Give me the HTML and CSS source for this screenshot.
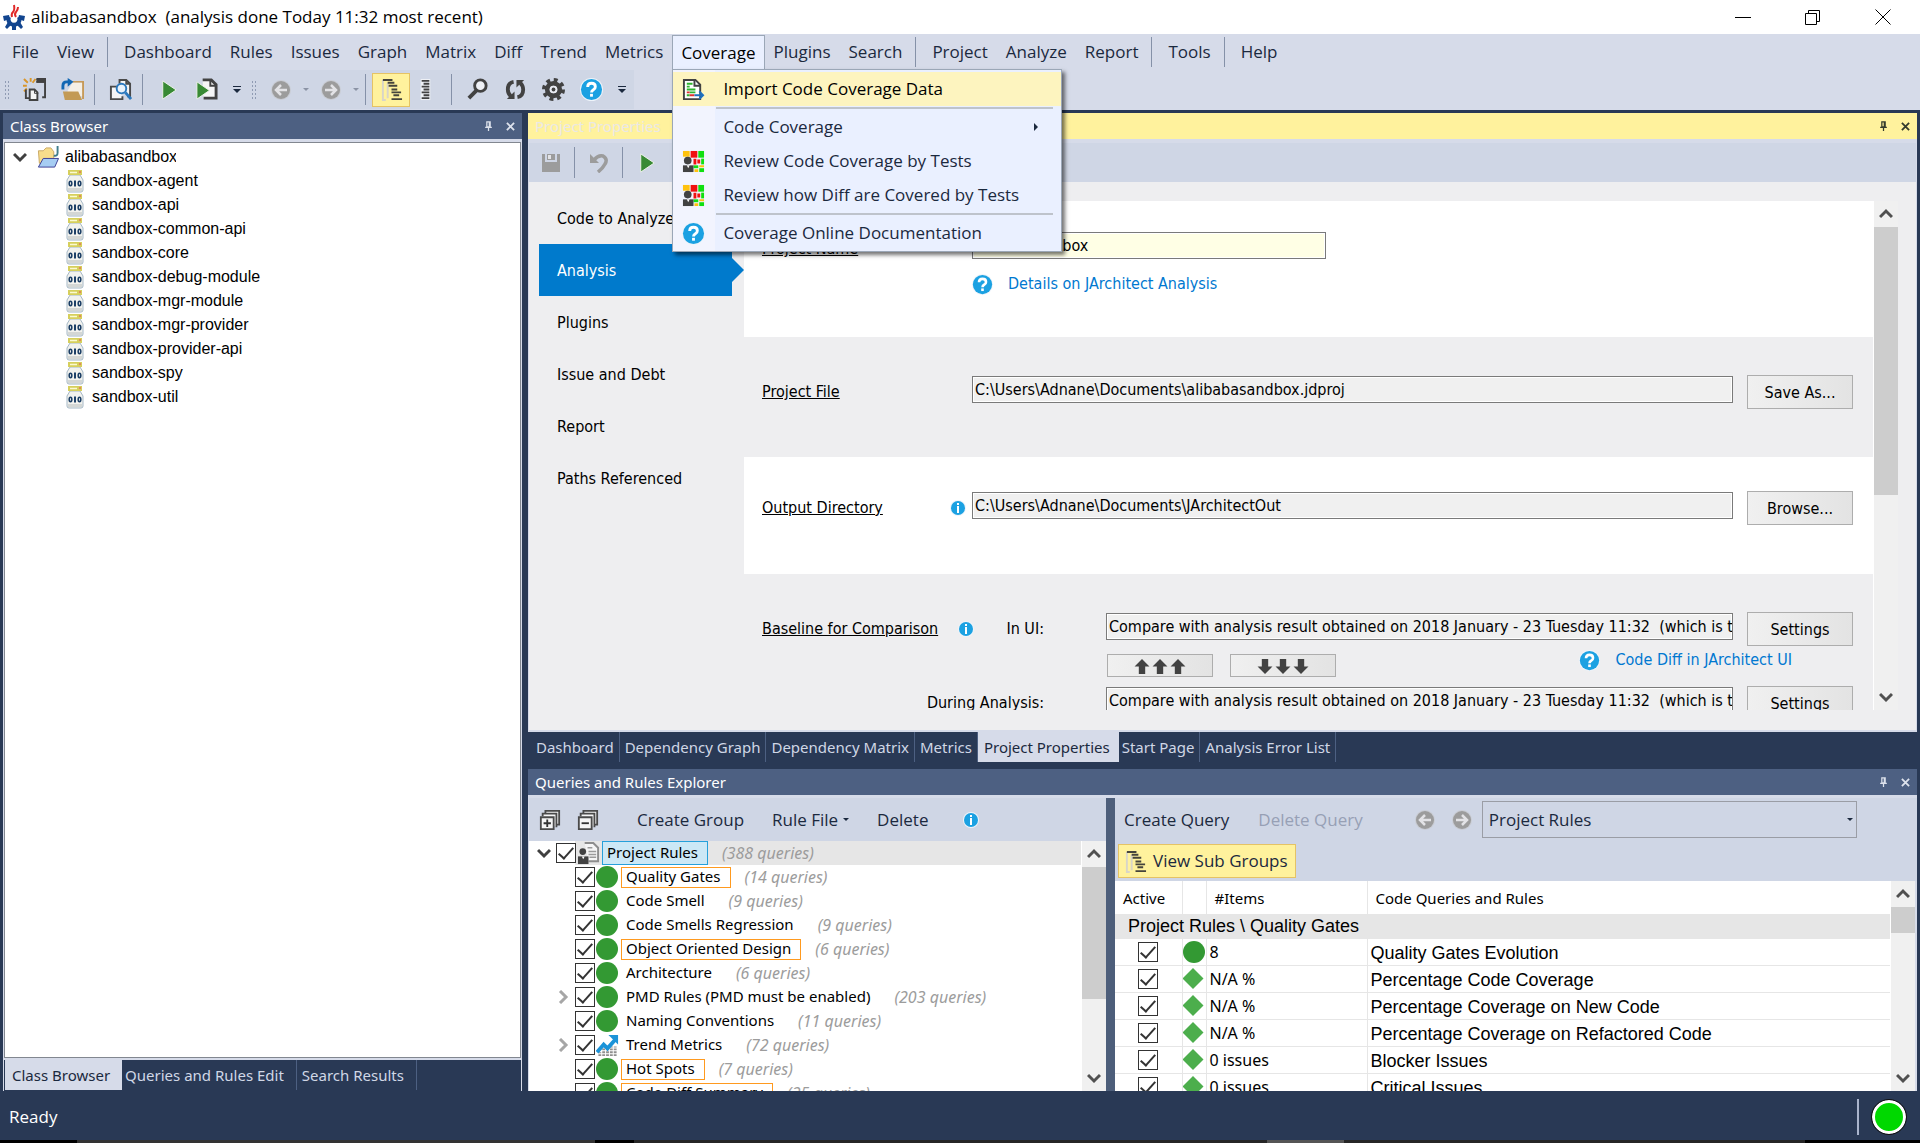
FILE: index.html
```html
<!DOCTYPE html>
<html lang="en">
<head>
<meta charset="utf-8">
<meta name="viewport" content="width=device-width, initial-scale=1">
<title>alibabasandbox - JArchitect</title>
<link rel="stylesheet" href="styles.css">
</head>
<body>
<svg class="sprite" aria-hidden="true">
  <symbol id="i-new" viewBox="0 0 24 24"><path d="M1 1l4 4M8 0v4M0 8h4M13 1l-3 4M1 14l3-3" stroke="#d9962b" stroke-width="2" fill="none"/><path d="M14 1h9v19h-3M14 4h9M3 12v9h4" stroke="#424242" stroke-width="2" fill="none"/><path d="M14 1h9v4h-9z" fill="#424242"/><path d="M7 12h5l3 3v8H7z" fill="#f5f5f5" stroke="#424242" stroke-width="2"/><path d="M12 12v4h4" stroke="#424242" fill="none"/></symbol>
  <symbol id="i-open" viewBox="0 0 24 24"><path d="M12 4h11v18" stroke="#c79a58" stroke-width="2" fill="none"/><path d="M12 5h10v14H7v-6z" fill="#f4efe6"/><path d="M2 14h16l4 9H4z" fill="#c39a55"/><path d="M2 12V8q0-4 4-4h3" stroke="#1267b3" stroke-width="3" fill="none"/><path d="M7 0l6 4-6 5z" fill="#1267b3"/></symbol>
  <symbol id="i-find" viewBox="0 0 24 24"><path d="M11 6V2h7l4 4v13h-3M18 2v4h4" stroke="#4a4a4a" stroke-width="2" fill="#f5f5f5"/><path d="M9 9H2v13h12v-3" stroke="#4a4a4a" stroke-width="2" fill="#f5f5f5"/><circle cx="13" cy="11" r="5" fill="#eaf3fb" stroke="#2b78bd" stroke-width="2"/><path d="M17 15l6 7" stroke="#2b78bd" stroke-width="3"/></symbol>
  <symbol id="i-play" viewBox="0 0 24 24"><path d="M6 3v19l14-9.500z" fill="#388a34" stroke="#edf2ea"/></symbol>
  <symbol id="i-playdoc" viewBox="0 0 24 24"><path d="M8 2h9l5 5v14H9" fill="#f5f5f5" stroke="#424242" stroke-width="3"/><path d="M16 2v6h6" stroke="#424242" stroke-width="2" fill="none"/><path d="M2 4v18l13-9z" fill="#388a34" stroke="#edf2ea"/></symbol>
  <symbol id="i-back" viewBox="0 0 20 20"><circle cx="10" cy="10" r="10" fill="#c9ccd3"/><circle cx="10" cy="10" r="9" fill="#9c9c9c"/><path d="M16 10H5M10 5l-5 5 5 5" stroke="#e3e3e6" stroke-width="2.500" fill="none"/></symbol>
  <symbol id="i-fwd" viewBox="0 0 20 20"><circle cx="10" cy="10" r="10" fill="#c9ccd3"/><circle cx="10" cy="10" r="9" fill="#9c9c9c"/><path d="M4 10h11M10 5l5 5-5 5" stroke="#e3e3e6" stroke-width="2.500" fill="none"/></symbol>
  <symbol id="i-tree" viewBox="0 0 24 24"><path d="M3 2v21h3M8 5v16" stroke="#d8d5c8" stroke-width="2" fill="none"/><path d="M3 2h10M8 5h7M9 8h9M12 12h6M12 15h10M14 18h6M12 22h11" stroke="#45443c" stroke-width="2"/></symbol>
  <symbol id="i-list" viewBox="0 0 24 24"><path d="M7 1h10v22H7z" fill="#eef0f5"/><path d="M8 3h8M10 6h6M8 9h8M10 12h6M8 15h8M10 18h6M8 21h8" stroke="#424242" stroke-width="2"/></symbol>
  <symbol id="i-search" viewBox="0 0 24 24"><circle cx="15" cy="8" r="6" fill="#eef0f5" stroke="#424242" stroke-width="3"/><path d="M11 13l-8 8" stroke="#424242" stroke-width="4"/></symbol>
  <symbol id="i-refresh" viewBox="0 0 24 24"><path d="M10 4q-6 1-6 8 0 4 3 7M14 20q6-1 6-8 0-4-3-7" stroke="#424242" stroke-width="4" fill="none"/><path d="M3 22h8v-8zM21 2h-8v8z" fill="#424242"/></symbol>
  <symbol id="i-gear" viewBox="0 0 24 24"><circle cx="12" cy="12" r="10" fill="none" stroke="#424242" stroke-width="4" stroke-dasharray="4 3.850"/><circle cx="12" cy="12" r="6.500" fill="none" stroke="#424242" stroke-width="5"/><circle cx="12" cy="12" r="4" fill="#e9ebf2"/><circle cx="12" cy="12" r="2" fill="#424242"/></symbol>
  <symbol id="i-help" viewBox="0 0 24 24"><circle cx="12" cy="12" r="12" fill="#eef4fa"/><circle cx="12" cy="12" r="11" fill="#1ba1e2"/><path d="M8 9.500q0-4 4-4t4 3.500q0 2-2 3.200t-2 2.800" stroke="#fff" stroke-width="3" fill="none"/><path d="M10.500 16.500h3v3h-3z" fill="#fff"/></symbol>
  <symbol id="i-info" viewBox="0 0 16 16"><circle cx="8" cy="8" r="8" fill="#eef4fa"/><circle cx="8" cy="8" r="7" fill="#1ba1e2"/><path d="M7 3h2v2H7zM7 6h2v7H7z" fill="#fff"/></symbol>
  <symbol id="i-pin" viewBox="0 0 10 12"><path d="M3 1h4v6H3zM1 7.500h8M5 8v4M6 1v6" stroke="currentColor" stroke-width="1.500" fill="none"/></symbol>
  <symbol id="i-x" viewBox="0 0 10 10"><path d="M1 1l8 8M9 1L1 9" stroke="currentColor" stroke-width="2" fill="none"/></symbol>
  <symbol id="i-chev" viewBox="0 0 14 14"><path d="M1 4l6 6 6-6" stroke="currentColor" stroke-width="3" fill="none"/></symbol>
  <symbol id="i-folder" viewBox="0 0 24 24"><path d="M2 5h5l3-3h5l3 4v12H3z" fill="#f7dd8c" stroke="#c9a763"/><path d="M22 0v7q0 4-4 3" stroke="#3f7d8c" stroke-width="2" fill="none"/><path d="M2 22l5-9h16l-4 9z" fill="#a6cdf3" stroke="#3a3d94"/></symbol>
  <symbol id="i-jar" viewBox="0 0 18 23"><path d="M4 5h10l3 5v10q0 2-2 2H3q-2 0-2-2V10z" fill="#f2f2ee" stroke="#a5b8c6"/><path d="M2 18h14v3H2z" fill="#d4d7d5"/><path d="M2 0h14v5H2z" fill="#d6cf5c"/><path d="M4 2.500h7" stroke="#fbf9d0" stroke-width="1.500"/><path d="M13 1h2v2h-2z" fill="#e08a5a"/><ellipse cx="4.500" cy="13.500" rx="1.300" ry="2.200" fill="none" stroke="#1c3f66" stroke-width="1.600"/><path d="M9 10.500v6" stroke="#1c3f66" stroke-width="2"/><ellipse cx="13.500" cy="13.500" rx="1.300" ry="2.200" fill="none" stroke="#1c3f66" stroke-width="1.600"/></symbol>
  <symbol id="i-import" viewBox="0 0 24 24"><path d="M2 2h12l5 5v15H2z" fill="#fff" stroke="#424242" stroke-width="2"/><path d="M13 2v6h6" fill="none" stroke="#424242" stroke-width="2"/><path d="M5 6h6M5 9h3M5 12h9" stroke="#2fb52f" stroke-width="2"/><path d="M8 15h6M5 18h3" stroke="#2fb52f" stroke-width="2"/><path d="M5 15h3M8 18h5" stroke="#e03030" stroke-width="2"/><path d="M13 18h9M18 14l4 4-4 4" stroke="#1d6fbf" stroke-width="2" fill="none"/></symbol>
  <symbol id="i-tests" viewBox="0 0 24 24"><path d="M1 1h7v6H1z" fill="#ffc20e"/><path d="M9 1h7v7H9z" fill="#f01010"/><path d="M17 1h6v7h-6z" fill="#10e010"/><path d="M12 9h3v6h-3zM16 10h3v4h-3z" fill="#f01010"/><path d="M20 9h3v6h-3z" fill="#10e010"/><path d="M12 16h5v3h-5z" fill="#10e010"/><path d="M18 16h5v2h-5zM13 20h4v3h-4z" fill="#ffc20e"/><path d="M18 19h5v4h-5z" fill="#10e010"/><circle cx="6" cy="11" r="4" fill="#424242"/><path d="M1 16h11v7H1z" fill="#424242"/><path d="M5 16h3l-1.500 3z" fill="#fff"/></symbol>
  <symbol id="i-save" viewBox="0 0 20 20"><path d="M1 1h3v8h12V1h3v18H1z" fill="#9c9c9c"/><path d="M6 1h8v6H6z" fill="#9c9c9c"/><path d="M7 2h3v4H7z" fill="#e3e3e6"/></symbol>
  <symbol id="i-undo" viewBox="0 0 20 20"><path d="M5 7q4-5 9-4 5 3 2 8-2 4-7 8" stroke="#9c9c9c" stroke-width="3.500" fill="none"/><path d="M1 1v9h9z" fill="#9c9c9c"/></symbol>
  <symbol id="i-up" viewBox="0 0 16 16"><path d="M8 1l7 7h-4v7H5V8H1z" fill="#424242"/></symbol>
  <symbol id="i-plus" viewBox="0 0 24 24"><path d="M7 6V2h15v15h-3M4 8V5h15v15" fill="#f5f5f5" stroke="#4a4a4a" stroke-width="2"/><path d="M2 9h14v13H2z" fill="#f5f5f5" stroke="#4a4a4a" stroke-width="2"/><path d="M5 15.500h8M9 11.500v8" stroke="#333" stroke-width="2"/></symbol>
  <symbol id="i-minus" viewBox="0 0 24 24"><path d="M7 6V2h15v15h-3M4 8V5h15v15" fill="#f5f5f5" stroke="#4a4a4a" stroke-width="2"/><path d="M2 9h14v13H2z" fill="#f5f5f5" stroke="#4a4a4a" stroke-width="2"/><path d="M5 15.500h8" stroke="#333" stroke-width="2"/></symbol>
  <symbol id="i-rules" viewBox="0 0 24 24"><path d="M8 1h9l5 5v14H12" fill="#f5f5f5" stroke="#8d8d8d" stroke-width="2"/><path d="M11 6h5M12 10h8M12 13h8M13 16h7" stroke="#9a9a9a" stroke-width="1.500"/><circle cx="6" cy="10" r="3.500" fill="#424242"/><path d="M1 15h11v8H1z" fill="#424242"/><path d="M5 15h3l-1.500 3z" fill="#fff"/></symbol>
  <symbol id="i-trend" viewBox="0 0 24 24"><path d="M4 23v-4M8 23v-8M12 23v-7M16 23V13M20 23v-10" stroke="#8f8f8f" stroke-width="3" stroke-dasharray="2 1"/><path d="M1 19l7-8 4 4 8-9" stroke="#1b93d8" stroke-width="4" fill="none"/><path d="M13 1h10v10z" fill="#1b93d8"/></symbol>
</svg>

<header class="titlebar">
  <svg class="logo" viewBox="0 0 22 26"><path d="M6 13a5.500 5.500 0 1 0 10 0" fill="none" stroke="#12458f" stroke-width="4"/><path d="M0 12l6-1 1 4-6 2zM2 23l3-5 3 3-4 4zM9 21h4v5H9zM14 21l3-3 3 5-2 2zM22 12l-6-1-1 4 6 2z" fill="#12458f"/><path d="M9 13q-1-3 1-5t1-7M13 13q-2-3 0-5t2-5" stroke="#e02a2a" stroke-width="2" fill="none"/></svg>
  <h1>alibabasandbox&nbsp; (analysis done Today 11:32 most recent)</h1>
  <div class="winctl">
    <button aria-label="Minimize"><svg viewBox="0 0 16 16"><path d="M0 8.500h16" stroke="#000"/></svg></button>
    <button aria-label="Restore"><svg viewBox="0 0 16 16"><path d="M.5 4.500h11v11H.5zM3.500 4V1.500h11v11H12" stroke="#000" fill="none"/></svg></button>
    <button aria-label="Close"><svg viewBox="0 0 16 16"><path d="M.5.5l15 15M15.500.5l-15 15" stroke="#000"/></svg></button>
  </div>
</header>

<nav class="menubar">
  <button>File</button><button>View</button><i class="sep"></i>
  <button>Dashboard</button><button>Rules</button><button>Issues</button><button>Graph</button><button>Matrix</button><button>Diff</button><button>Trend</button><button>Metrics</button>
  <div class="menu">
    <button class="open">Coverage</button>
    <div class="dropdown">
      <button class="hot"><svg><use href="#i-import"/></svg>Import Code Coverage Data</button>
      <hr>
      <button><svg></svg>Code Coverage<i class="sub"></i></button>
      <button><svg><use href="#i-tests"/></svg>Review Code Coverage by Tests</button>
      <button><svg><use href="#i-tests"/></svg>Review how Diff are Covered by Tests</button>
      <hr>
      <button><svg><use href="#i-help"/></svg>Coverage Online Documentation</button>
    </div>
  </div>
  <button>Plugins</button><button>Search</button><i class="sep"></i>
  <button>Project</button><button>Analyze</button><button>Report</button><i class="sep"></i>
  <button>Tools</button><i class="sep"></i><button>Help</button>
</nav>

<div class="toolrow">
  <div class="toolbar">
    <i class="grip"></i>
    <button aria-label="New"><svg><use href="#i-new"/></svg></button>
    <button aria-label="Open"><svg><use href="#i-open"/></svg></button>
    <i class="sep"></i>
    <button aria-label="Find in files"><svg><use href="#i-find"/></svg></button>
    <i class="sep"></i>
    <button aria-label="Run"><svg><use href="#i-play"/></svg></button>
    <button aria-label="Run and report"><svg><use href="#i-playdoc"/></svg></button>
    <button class="more" aria-label="More"></button>
    <i class="grip"></i>
    <button class="round" aria-label="Back"><svg><use href="#i-back"/></svg></button>
    <button class="drop" aria-label="Back history"></button>
    <button class="round" aria-label="Forward"><svg><use href="#i-fwd"/></svg></button>
    <button class="drop" aria-label="Forward history"></button>
    <i class="sep"></i>
    <button class="on" aria-label="Tree view"><svg><use href="#i-tree"/></svg></button>
    <button class="slim" aria-label="List view"><svg><use href="#i-list"/></svg></button>
    <i class="sep far"></i>
    <button aria-label="Search"><svg><use href="#i-search"/></svg></button>
    <button aria-label="Refresh"><svg><use href="#i-refresh"/></svg></button>
    <button aria-label="Options"><svg><use href="#i-gear"/></svg></button>
    <button aria-label="Help"><svg><use href="#i-help"/></svg></button>
    <button class="more" aria-label="More"></button>
  </div>
</div>

<main class="dock">
  <section class="pane">
    <header class="caption"><h2>Class Browser</h2><button aria-label="Pin"><svg class="pin"><use href="#i-pin"/></svg></button><button aria-label="Close"><svg><use href="#i-x"/></svg></button></header>
    <div class="treebox">
      <ul class="classes">
        <li class="root"><svg class="chev"><use href="#i-chev"/></svg><svg class="fold"><use href="#i-folder"/></svg><span>alibabasandbox</span></li>
        <li><svg><use href="#i-jar"/></svg>sandbox-agent</li>
        <li><svg><use href="#i-jar"/></svg>sandbox-api</li>
        <li><svg><use href="#i-jar"/></svg>sandbox-common-api</li>
        <li><svg><use href="#i-jar"/></svg>sandbox-core</li>
        <li><svg><use href="#i-jar"/></svg>sandbox-debug-module</li>
        <li><svg><use href="#i-jar"/></svg>sandbox-mgr-module</li>
        <li><svg><use href="#i-jar"/></svg>sandbox-mgr-provider</li>
        <li><svg><use href="#i-jar"/></svg>sandbox-provider-api</li>
        <li><svg><use href="#i-jar"/></svg>sandbox-spy</li>
        <li><svg><use href="#i-jar"/></svg>sandbox-util</li>
      </ul>
    </div>
    <div class="tabs side"><button class="active">Class Browser</button><button>Queries and Rules Edit</button><button>Search Results</button></div>
  </section>

  <div class="right">
    <section class="pane">
      <header class="caption focus"><h2>Project Properties</h2><button aria-label="Pin"><svg class="pin"><use href="#i-pin"/></svg></button><button aria-label="Close"><svg><use href="#i-x"/></svg></button></header>
      <div class="formbar">
        <button aria-label="Save"><svg><use href="#i-save"/></svg></button><i class="sep"></i>
        <button aria-label="Undo"><svg><use href="#i-undo"/></svg></button><i class="sep"></i>
        <button aria-label="Run"><svg class="big"><use href="#i-play"/></svg></button>
      </div>
      <div class="props">
        <nav class="pages">
          <button>Code to Analyze</button><button class="active">Analysis</button><button>Plugins</button><button>Issue and Debt</button><button>Report</button><button>Paths Referenced</button>
        </nav>
        <div class="formwrap">
          <form class="form">
            <div class="block b1">
              <label class="lead" for="pname">Project Name</label>
              <div class="cell">
                <input id="pname" class="name" value="alibabasandbox">
                <div class="help"><svg><use href="#i-help"/></svg><a href="#analysis">Details on JArchitect Analysis</a></div>
              </div>
            </div>
            <div class="block b2">
              <label class="lead" for="pfile">Project File</label>
              <div class="cell"><input id="pfile" readonly value="C:\Users\Adnane\Documents\alibabasandbox.jdproj"></div>
              <button type="button">Save As...</button>
            </div>
            <div class="block b3">
              <label class="lead" for="pout">Output Directory</label>
              <svg class="info"><use href="#i-info"/></svg>
              <div class="cell"><input id="pout" readonly value="C:\Users\Adnane\Documents\JArchitectOut"></div>
              <button type="button">Browse...</button>
            </div>
            <div class="block b4">
              <span class="lead">Baseline for Comparison</span>
              <svg class="info"><use href="#i-info"/></svg>
              <label class="minor" for="cmp1">In UI:</label>
              <div class="cell"><input id="cmp1" readonly value="Compare with analysis result obtained on 2018 January - 23 Tuesday 11:32  (which is t"></div>
              <button type="button">Settings</button>
              <div class="moves">
                <button type="button" aria-label="Copy up"><svg><use href="#i-up"/></svg><svg><use href="#i-up"/></svg><svg><use href="#i-up"/></svg></button>
                <button type="button" class="down" aria-label="Copy down"><svg><use href="#i-up"/></svg><svg><use href="#i-up"/></svg><svg><use href="#i-up"/></svg></button>
                <div class="help"><svg><use href="#i-help"/></svg><a href="#diff">Code Diff in JArchitect UI</a></div>
              </div>
              <label class="minor" for="cmp2">During Analysis:</label>
              <div class="cell"><input id="cmp2" readonly value="Compare with analysis result obtained on 2018 January - 23 Tuesday 11:32  (which is t"></div>
              <button type="button">Settings</button>
            </div>
          </form>
          <div class="scroll s1"><svg class="flip"><use href="#i-chev"/></svg><i></i><b></b><svg><use href="#i-chev"/></svg></div>
        </div>
      </div>
      <div class="tabs"><button>Dashboard</button><button>Dependency Graph</button><button>Dependency Matrix</button><button>Metrics</button><button class="active">Project Properties</button><button>Start Page</button><button>Analysis Error List</button></div>
    </section>

    <section class="pane">
      <header class="caption"><h2>Queries and Rules Explorer</h2><button aria-label="Pin"><svg class="pin"><use href="#i-pin"/></svg></button><button aria-label="Close"><svg><use href="#i-x"/></svg></button></header>
      <div class="explorer">
        <div class="groups">
          <div class="cmds">
            <button aria-label="Expand all"><svg><use href="#i-plus"/></svg></button>
            <button aria-label="Collapse all"><svg><use href="#i-minus"/></svg></button>
            <button class="txt">Create Group</button>
            <button class="txt">Rule File<i class="caret"></i></button>
            <button class="txt">Delete</button>
            <svg class="info"><use href="#i-info"/></svg>
          </div>
          <div class="listwrap">
            <ul class="rules">
              <li class="root"><svg class="chev"><use href="#i-chev"/></svg><input type="checkbox" checked id="r0"><svg class="ic"><use href="#i-rules"/></svg><label for="r0" class="sel">Project Rules</label><em>(388 queries)</em></li>
              <li><i class="nochev"></i><input type="checkbox" checked id="r1"><i class="dot"></i><label for="r1" class="box">Quality Gates</label><em>(14 queries)</em></li>
              <li><i class="nochev"></i><input type="checkbox" checked id="r2"><i class="dot"></i><label for="r2">Code Smell</label><em>(9 queries)</em></li>
              <li><i class="nochev"></i><input type="checkbox" checked id="r3"><i class="dot"></i><label for="r3">Code Smells Regression</label><em>(9 queries)</em></li>
              <li><i class="nochev"></i><input type="checkbox" checked id="r4"><i class="dot"></i><label for="r4" class="box">Object Oriented Design</label><em>(6 queries)</em></li>
              <li><i class="nochev"></i><input type="checkbox" checked id="r5"><i class="dot"></i><label for="r5">Architecture</label><em>(6 queries)</em></li>
              <li><svg class="chev shut"><use href="#i-chev"/></svg><input type="checkbox" checked id="r6"><i class="dot"></i><label for="r6">PMD Rules (PMD must be enabled)</label><em>(203 queries)</em></li>
              <li><i class="nochev"></i><input type="checkbox" checked id="r7"><i class="dot"></i><label for="r7">Naming Conventions</label><em>(11 queries)</em></li>
              <li><svg class="chev shut"><use href="#i-chev"/></svg><input type="checkbox" checked id="r8"><svg class="ic"><use href="#i-trend"/></svg><label for="r8">Trend Metrics</label><em>(72 queries)</em></li>
              <li><i class="nochev"></i><input type="checkbox" checked id="r9"><i class="dot"></i><label for="r9" class="box">Hot Spots</label><em>(7 queries)</em></li>
              <li><i class="nochev"></i><input type="checkbox" checked id="r10"><i class="dot"></i><label for="r10" class="box">Code Diff Summary</label><em>(25 queries)</em></li>
            </ul>
            <div class="scroll s2"><svg class="flip"><use href="#i-chev"/></svg><i></i><b></b><svg><use href="#i-chev"/></svg></div>
          </div>
        </div>
        <div class="splitter"></div>
        <div class="queries">
          <div class="qbar">
            <div class="qrow">
              <button class="txt">Create Query</button>
              <button class="txt" disabled>Delete Query</button>
              <div class="navs">
                <button aria-label="Back"><svg><use href="#i-back"/></svg></button>
                <button aria-label="Forward"><svg><use href="#i-fwd"/></svg></button>
              </div>
              <div class="combo"><select aria-label="Rule group"><option>Project Rules</option></select><i class="caret"></i></div>
            </div>
            <button class="viewsub"><svg><use href="#i-tree"/></svg>View Sub Groups</button>
          </div>
          <div class="listwrap">
            <div class="gridbox">
            <table>
              <colgroup><col class="c1"><col class="c2"><col class="c3"><col></colgroup>
              <thead><tr><th>Active</th><th></th><th>#Items</th><th>Code Queries and Rules</th></tr></thead>
              <tbody>
                <tr class="group"><td colspan="4">Project Rules \ Quality Gates</td></tr>
                <tr><td><input type="checkbox" checked aria-label="Quality Gates Evolution"></td><td><i class="dot"></i></td><td>8</td><td>Quality Gates Evolution</td></tr>
                <tr><td><input type="checkbox" checked aria-label="Percentage Code Coverage"></td><td><i class="gem"></i></td><td>N/A %</td><td>Percentage Code Coverage</td></tr>
                <tr><td><input type="checkbox" checked aria-label="Percentage Coverage on New Code"></td><td><i class="gem"></i></td><td>N/A %</td><td>Percentage Coverage on New Code</td></tr>
                <tr><td><input type="checkbox" checked aria-label="Percentage Coverage on Refactored Code"></td><td><i class="gem"></i></td><td>N/A %</td><td>Percentage Coverage on Refactored Code</td></tr>
                <tr><td><input type="checkbox" checked aria-label="Blocker Issues"></td><td><i class="gem"></i></td><td>0 issues</td><td>Blocker Issues</td></tr>
                <tr><td><input type="checkbox" checked aria-label="Critical Issues"></td><td><i class="gem"></i></td><td>0 issues</td><td>Critical Issues</td></tr>
              </tbody>
            </table>
            </div>
            <div class="scroll s3"><svg class="flip"><use href="#i-chev"/></svg><i></i><b></b><svg><use href="#i-chev"/></svg></div>
          </div>
        </div>
      </div>
    </section>
  </div>
</main>

<footer class="status"><span>Ready</span><i class="led"></i></footer>
<div class="taskbar"></div>
</body>
</html>
```
FILE: styles.css
```css
:root {
  --ui: "Open Sans", "Noto Sans", sans-serif;
  --panel: "Noto Sans", "Open Sans", sans-serif;
  --form: "DejaVu Sans Condensed", "Noto Sans", sans-serif;
  --grid: "Liberation Sans", Arial, sans-serif;
  --navy: #293955;
  --slate: #4d6082;
  --light: #d6dbe9;
  --bar: #cfd6e5;
  --ink: #1b293e;
  --hot: #fff29d;
}
* { box-sizing: border-box; }
body {
  margin: 0;
  height: 100vh;
  display: flex;
  flex-direction: column;
  overflow: hidden;
  background: var(--navy);
  color: #000;
  font: 17px/24px var(--ui);
}
.sprite { display: none; }
svg { display: block; flex: none; }
button { margin: 0; padding: 0; border: 0; background: none; font: inherit; color: inherit; }
h1, h2, ul { margin: 0; padding: 0; font: inherit; list-style: none; }
i { font-style: normal; }

/* Title bar */
.titlebar { flex: none; display: flex; align-items: center; height: 34px; padding: 0 2px 0 3px; background: #fff; }
.titlebar h1 { flex: 1; padding-left: 6px; }
.logo { width: 22px; height: 26px; }
.winctl { display: flex; }
.winctl button { display: grid; place-items: center; width: 70px; height: 34px; }
.winctl svg { width: 16px; height: 16px; }

/* Menu bar */
.menubar { flex: none; display: flex; height: 36px; padding-left: 3px; background: var(--light); color: var(--ink); }
.menubar > button, .menu > button { height: 36px; padding: 0 9px; }
.sep { flex: none; width: 1px; margin: 3px 6px 3px 3px; background: #8591a8; }
.menubar .sep { margin: 3px 7px 3px 4px; }
.menu { position: relative; }
.menu > .open { height: 35px; margin-top: 1px; padding: 0 8px; border: 1px solid #9ba7b7; border-bottom: 0; background: #eaf0ff; color: #000; }
.dropdown {
  position: absolute;
  z-index: 5;
  top: 35px;
  left: 0;
  width: 390px;
  padding: 2px 0 1px;
  border: 1px solid #9ba7b7;
  background: linear-gradient(90deg, #f2f4fe 42px, #eaf0ff 42px);
  box-shadow: 3px 3px 4px rgba(0, 0, 0, .55);
}
.dropdown button { display: flex; align-items: center; gap: 18px; width: 100%; height: 34px; padding-left: 9px; }
.dropdown svg { width: 23px; height: 23px; }
.dropdown .hot { background: #fdf4bf; color: #000; }
.dropdown hr { height: 2px; margin: 1px 8px 1px 43px; border: 0; background: #bec3cb; }
.sub { margin-left: auto; margin-right: 23px; border: 4px solid transparent; border-left-color: #1b293e; border-right: 0; }

/* Main toolbar */
.toolrow { flex: none; display: flex; height: 40px; background: var(--light); }
.toolbar { display: flex; align-items: center; height: 39px; padding: 0 0 0 2px; background: var(--bar); }
.toolbar button { display: grid; place-items: center; width: 38px; height: 34px; }
.toolbar svg { width: 23px; height: 23px; }
.toolbar .round svg { width: 20px; height: 20px; }
.toolbar .sep { align-self: stretch; margin: 4px 6px 4px 3px; }
.toolbar .far { margin-left: 11px; }
.toolbar .slim { width: 30px; }
.toolbar .on { border: 1px solid #e5c365; background: var(--hot); }
.grip { flex: none; width: 6px; height: 20px; margin: 0 5px 0 2px; background: radial-gradient(circle, #8f9bb3 1px, transparent 1px) 0 0 / 3px 4px; }
.toolbar .more { display: flex; flex-direction: column; align-items: center; justify-content: center; gap: 2px; width: 24px; }
.more::before { content: ""; width: 8px; height: 1px; background: var(--ink); }
.more::after { content: ""; border: 4px solid transparent; border-top-color: var(--ink); border-bottom: 0; }
.toolbar .drop { width: 12px; }
.drop::before { content: ""; border: 3px solid transparent; border-top-color: #8b93a5; border-bottom: 0; }

/* Dock layout */
.dock { flex: 1; min-height: 0; display: grid; grid-template-columns: minmax(0, 519fr) minmax(0, 1389fr); gap: 6px; padding: 3px 3px 0; }
.right { min-height: 0; display: grid; grid-template-rows: minmax(0, 649fr) minmax(0, 322fr); gap: 7px; }
.pane { min-height: 0; display: flex; flex-direction: column; background: var(--light); }
.caption { flex: none; display: flex; align-items: center; height: 26px; padding: 0 1px 0 7px; background: var(--slate); color: #fff; font: 15px/26px var(--panel); }
.caption h2 { flex: 1; }
.caption button { display: grid; place-items: center; width: 22px; height: 26px; color: #dde2ec; }
.caption svg { width: 9px; height: 9px; }
.caption .pin { height: 10px; }
.caption.focus { background: var(--hot); color: #eae8e6; }
.caption.focus button { color: #333a2c; }
.tabs { flex: none; display: flex; height: 30px; background: var(--navy); color: #d0d7e6; font: 15px/28px var(--panel); }
.tabs button { padding: 0 5px; border-right: 1px solid #4d6082; }
.tabs button:first-child { padding-left: 8px; }
.tabs .active { padding: 0 9px 0 6px; border-right: 0; background: var(--light); color: var(--ink); }
.tabs .active + button { padding-left: 3px; }

/* Class browser */
.treebox { flex: 1; min-height: 0; overflow: hidden; margin: 3px 1px 2px; border: 1px solid #828790; background: #fff; }
.tabs.side { height: 31px; margin: 0 1px; padding: 0 0 1px 1px; }
.tabs.side button { padding-right: 12px; }
.tabs.side .active { padding-left: 7px; }
.classes { padding-top: 2px; font: 16px/24px var(--grid); }
.classes li { display: flex; align-items: center; gap: 8px; height: 24px; padding-left: 61px; }
.classes svg { width: 18px; height: 23px; }
.classes .root { gap: 5px; padding-left: 8px; }
.classes .root span { max-width: 111px; overflow: hidden; }
.classes .chev { width: 14px; height: 14px; margin-right: 4px; color: #404040; }
.classes .fold { width: 24px; height: 23px; }

/* Project properties */
.formbar { flex: none; display: flex; align-items: center; height: 39px; margin: 4px 1px 0; padding: 0 2px; background: var(--bar); }
.formbar button { display: grid; place-items: center; width: 39px; height: 34px; }
.formbar svg { width: 20px; height: 20px; }
.formbar .big { width: 23px; height: 23px; }
.formbar .sep { align-self: stretch; margin: 4px 4px; }
.props { flex: 1; min-height: 0; display: flex; margin: 0 1px 2px; padding: 10px 18px 20px 10px; background: #eeeef0; font: 16px/22px var(--form); }
.pages { flex: none; width: 205px; }
.pages button { position: relative; display: block; width: 193px; height: 52px; padding: 2px 0 0 18px; text-align: left; white-space: nowrap; }
.pages .active { background: #007acc; color: #fff; }
.pages .active::after { content: ""; position: absolute; top: 14px; left: 100%; border: 12px solid transparent; border-left-color: #007acc; border-right: 0; }
.formwrap { flex: 1; min-width: 0; display: flex; margin-top: 9px; }
.form { flex: 1; min-width: 0; overflow: hidden; background: #fff; }
.block { display: grid; align-items: start; align-content: start; grid-template-columns: 188px 22px minmax(0, 1fr) 106px; padding: 38px 20px 0 18px; }
.b1 { height: 136px; padding-top: 31px; }
.b2 { height: 120px; background: #eeeef0; }
.b3 { height: 117px; padding-top: 34px; }
.b4 { height: 180px; grid-template-columns: 188px 156px minmax(0, 1fr) 106px; background: #eeeef0; }
.lead { grid-row: 1; grid-column: 1; margin-top: 6px; text-decoration: underline; white-space: nowrap; }
.cell { grid-column: 3; margin: 1px 14px 0 0; }
.b1 .cell { margin-top: 0; }
.block > button, .moves button { height: 34px; padding-top: 1px; border: 1px solid #adadad; background: linear-gradient(90deg, #f0f0f0, #e3e3e3); text-align: center; }
.cell input { display: block; width: 100%; height: 27px; margin: 0; padding: 0 0 0 2px; border: 1px solid #7a7a7a; outline: 0; background: #f0f0f0; box-shadow: inset 0 0 0 1px #fff; font: inherit; color: #000; }
.cell .name { width: 354px; background: #ffffe5; }
.help { display: flex; align-items: center; gap: 15px; margin-top: 14px; }
.help svg { width: 21px; height: 21px; }
.help a { color: #0078d0; text-decoration: none; }
.block .info { grid-column: 2; grid-row: 1; width: 16px; height: 16px; margin-top: 9px; }
.b4 .info { margin-left: 8px; }
.minor { grid-column: 1 / 3; justify-self: end; margin: 6px 62px 0 0; }
.b4 .minor, .b4 > .cell { grid-row: 1; }
.b4 > button { grid-row: 1; grid-column: 4; }
.b4 .moves ~ .minor, .b4 .moves ~ .cell, .b4 .moves ~ button { grid-row: 3; }
.moves { grid-row: 2; grid-column: 3 / 5; display: flex; gap: 17px; height: 40px; padding: 8px 61px 0 1px; }
.moves button { display: flex; align-items: center; justify-content: center; width: 106px; height: 23px; }
.moves button svg { width: 18px; height: 17px; }
.moves .down svg { transform: rotate(180deg); }
.moves .help { height: 22px; margin: -5px 0 0 auto; }

/* Scroll bars */
.scroll { flex: none; display: flex; flex-direction: column; align-items: center; width: 25px; background: #f0f0f0; border-left: 1px solid #fff; color: #505050; }
.scroll svg { width: 14px; height: 14px; margin: 6px 0; }
.scroll .flip { transform: rotate(180deg); }
.scroll i { width: 100%; background: #cdcdcd; }
.s1 i { flex: 268; } .s1 b { flex: 189; }
.s2 i { flex: 132; } .s2 b { flex: 66; }
.s3 i { flex: 26; } .s3 b { flex: 132; }

/* Queries and rules explorer */
.explorer { flex: 1; min-height: 0; display: grid; grid-template-columns: minmax(0, 578fr) 9px minmax(0, 802fr); margin-top: 3px; }
.splitter { background: #4d5e7a; }
.groups, .queries { min-height: 0; display: flex; flex-direction: column; }
.cmds { flex: none; display: flex; align-items: center; height: 43px; margin-left: 1px; padding-left: 10px; background: var(--bar); color: var(--ink); }
.cmds button { display: flex; align-items: center; margin-right: 16px; }
.cmds svg { width: 22px; height: 22px; }
.cmds .txt { margin: 0 0 0 22px; }
.cmds .txt + .txt { margin-left: 28px; }
.cmds .info { width: 16px; height: 16px; margin-left: 35px; }
.caret { border: 3px solid transparent; border-top-color: var(--ink); border-bottom: 0; }
.cmds .caret { margin-left: 5px; }
.listwrap { flex: 1; min-height: 0; display: flex; overflow: hidden; margin-left: 1px; background: #fff; }
.rules { flex: 1; min-width: 0; overflow: hidden; font: 15px/22px var(--panel); }
.rules li { display: flex; align-items: center; height: 24px; padding-left: 27px; white-space: nowrap; }
.rules .root { padding-left: 8px; background: linear-gradient(90deg, #fff 46px, #e6e6e6 46px); }
.chev { width: 14px; height: 14px; margin-right: 5px; color: #404040; }
.rules .shut { transform: rotate(-90deg); color: #a6a6a6; }
.nochev { flex: none; width: 19px; }
input[type="checkbox"] { flex: none; appearance: none; display: grid; place-items: center; width: 20px; height: 20px; margin: 0; border: 1px solid #333; background: #fff; }
input[type="checkbox"]:checked::after { content: ""; width: 6px; height: 13px; margin-bottom: 4px; border: solid #333; border-width: 0 2px 2px 0; transform: rotate(42deg); }
.dot { flex: none; display: block; width: 22px; height: 22px; margin: 0 3px 0 1px; border-radius: 50%; background: #339933; }
.ic { width: 23px; height: 23px; margin: 0 2px 0 1px; }
.rules label { padding: 0 9px 2px 4px; border: 1px solid transparent; line-height: 17px; }
.rules label.box { border-color: #ff9a1f; }
.rules label.sel { line-height: 20px; border-color: #26a0da; background: #cce8f6; }
.rules em { margin-left: 14px; color: #9c9c9c; font-size: 16px; }

.qbar { flex: none; height: 83px; padding: 2px 0 0 3px; background: var(--bar); color: var(--ink); }
.qrow { display: flex; align-items: center; height: 39px; padding: 0 60px 0 6px; }
.qrow .txt { margin-right: 29px; }
.qrow .txt:disabled { color: #97a0b5; }
.navs { display: flex; gap: 17px; margin: 0 10px 0 23px; }
.qrow svg { width: 20px; height: 20px; }
.combo { position: relative; flex: 1; }
.combo select { display: block; appearance: none; width: 100%; height: 37px; padding: 0 6px; border: 1px solid #9a9da5; border-radius: 0; background: var(--bar); color: var(--ink); font: inherit; }
.combo .caret { position: absolute; right: 4px; top: 17px; }
.viewsub { display: flex; align-items: center; gap: 6px; height: 34px; margin-top: 5px; padding: 0 7px 0 5px; border: 1px solid #e5c365; background: var(--hot); }
.viewsub svg { width: 23px; height: 23px; }
.gridbox { flex: 1; min-width: 0; overflow: hidden; }
.queries .listwrap { margin-left: 0; margin-right: 2px; }
table { width: 100%; table-layout: fixed; border-collapse: collapse; font: 15px/20px var(--panel); }
.c1 { width: 67px; } .c2 { width: 24px; } .c3 { width: 161px; }
th { height: 33px; padding: 0 8px; text-align: left; font-weight: 400; border-right: 1px solid #e6e6e6; }
td { height: 27px; padding: 0 0 0 3px; border: solid #e6e6e6; border-width: 0 1px 1px 0; white-space: nowrap; font-size: 16px; }
th:last-child, td:last-child { border-right: 0; }
td:first-child { padding-left: 23px; }
td:nth-child(2) { padding: 0; }
td:last-child { padding: 2px 0 0 3px; font: 18px/24px var(--grid); }
.group td:last-child { height: 24px; padding: 2px 0 0 13px; line-height: 21px; background: #e6e6e6; }
td .dot { margin: 0; }
.gem { display: block; width: 21px; height: 21px; background: #4cae4c; clip-path: polygon(50% 0, 100% 50%, 50% 100%, 0 50%); }

/* Status bar */
.status { flex: none; display: flex; align-items: center; justify-content: space-between; height: 49px; padding: 2px 14px 0 9px; color: #fff; }
.led { display: flex; align-items: center; height: 36px; padding-left: 13px; border-left: 2px solid #a9b4cc; }
.led::before { content: ""; flex: none; width: 28px; height: 28px; border: 3px solid #fff; border-radius: 50%; outline: 1px solid #111; background: #00d800; }
.taskbar { flex: none; height: 3px; background: linear-gradient(90deg, #000 4%, #333 4%, #333 31%, #000 31%, #000 33%, #262626 33%, #262626 66%, #555 66%, #555 70%, #262626 70%, #262626 94%, #000 94%); }
```
